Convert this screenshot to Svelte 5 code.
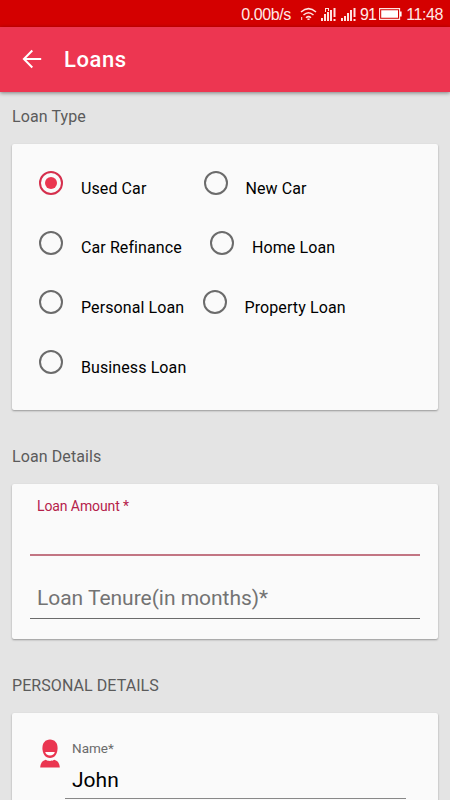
<script>
  let selected = $state('Used Car');
  const rows = [
    [{ name: 'Used Car', width: 164.5 }, { name: 'New Car', width: 150 }],
    [{ name: 'Car Refinance', width: 171 }, { name: 'Home Loan', width: 150 }],
    [{ name: 'Personal Loan', width: 163.5 }, { name: 'Property Loan', width: 150 }],
    [{ name: 'Business Loan', width: 180 }]
  ];
</script>

<div class="screen">
  <div class="status">
    <span class="speed">0.00b/s</span>
    <svg class="wifi" width="17" height="14" viewBox="0 0 17 14" fill="none" stroke="#ffe3e1" stroke-width="1.5">
      <path d="M1 5Q8.5-1.8 16 5M3.5 8Q8.5 3.4 13.5 8M6 10.7Q8.5 8.6 11 10.7" />
      <path d="M7.4 12.2h2.2" />
      <path d="M1.7 10v3" stroke-width="1" />
    </svg>
    <svg class="signal" width="15" height="13" viewBox="0 0 15 13" fill="#ffe3e1">
      <path d="M0 10h2v3H0zM3 6h2v7H3zM6 4h2v9H6zM9 2h2v11H9zM12.5 0h2v9h-2zM12.5 11h2v2h-2zM4 0h4v1H4zM4 0h1v4H4zM7 0h1v3H7z" />
    </svg>
    <svg class="signal second" width="15" height="13" viewBox="0 0 15 13" fill="#ffe3e1">
      <path d="M0 10h2v3H0zM3 8h2v5H3zM6 5h2v8H6zM9 2h2v11H9zM12.5 0h2v9h-2zM12.5 11h2v2h-2z" />
    </svg>
    <span class="percent">91</span>
    <svg class="battery" width="23" height="12" viewBox="0 0 23 12">
      <path d="M.6.6h20v10.8H.6z" fill="none" stroke="#ffe3e1" stroke-width="1.1" />
      <path d="M2.2 2.2h16.8v7.6H2.2zM21 3.5h1.6v5H21z" fill="#fff" />
    </svg>
    <span class="time">11:48</span>
  </div>

  <header>
    <svg width="20" height="20" viewBox="0 0 20 20" fill="none" stroke="#fff" stroke-width="2">
      <path d="M19.2 10H2.6M10.3 1.5L1.9 10l8.4 8.5" />
    </svg>
    <h1>Loans</h1>
  </header>

  <main>
    <h2 class="type">Loan Type</h2>
    <section class="card options">
      {#each rows as row}
        <div class="row">
          {#each row as option}
            <button style="width:{option.width}px" onclick={() => (selected = option.name)}>
              <span class="radio" class:on={selected === option.name}></span>
              <span class="label">{option.name}</span>
            </button>
          {/each}
        </div>
      {/each}
    </section>

    <h2 class="details">Loan Details</h2>
    <section class="card fields">
      <div class="field amount"><span>Loan Amount *</span></div>
      <div class="field tenure"><span>Loan Tenure(in months)*</span></div>
    </section>

    <h2 class="personal">PERSONAL DETAILS</h2>
    <section class="card person">
      <svg width="20" height="29" viewBox="0 0 20 29" fill="#ea3550">
        <path d="M10 .5C5.300.5 2.400 4 2.400 9c0 5.900 3 10 7.600 10s7.600-4.100 7.600-10C17.600 4 14.700.5 10 .5z" />
        <path d="M5.200 13h9.600c-.5 2.200-2.300 3.600-4.800 3.600S5.700 15.200 5.200 13z" fill="#fff" />
        <path d="M.2 28.500c.2-4 1.900-6.800 5.500-7.800 2.300 1.600 6.300 1.600 8.600 0 3.600 1 5.300 3.800 5.500 7.800z" />
      </svg>
      <div class="name">
        <span class="caption">Name*</span>
        <span class="value">John</span>
      </div>
    </section>
  </main>
</div>

<style>
  :global(body) { margin: 0; }
  .screen {
    width: 450px; height: 800px; overflow: hidden;
    display: flex; flex-direction: column;
    background: #e4e4e4; font-family: Roboto, sans-serif;
  }
  .status {
    height: 27px; flex: none; display: flex; align-items: center; justify-content: flex-end;
    padding-right: 7px; box-sizing: border-box;
    background: #d40000; color: #ffe9e7;
    font-family: "Liberation Sans", sans-serif; font-size: 16px; line-height: 27px;
  }
  .status span { padding-top: 1px; height: 26px; white-space: nowrap; letter-spacing: -.4px; }
  .status svg { margin-top: 1px; }
  .status .percent { letter-spacing: -.8px; }
  .wifi { margin-left: 9px; }
  .signal { margin-left: 4px; margin-right: 1px; }
  .second { margin-right: 4px; }
  .battery { margin: 0 4px 0 3px; }
  header {
    height: 64.500px; flex: none; box-sizing: border-box; display: flex; align-items: center;
    padding-left: 22px; background: #ed3651; color: #fff;
    box-shadow: 0 1px 4px rgba(0, 0, 0, .45); z-index: 1;
  }
  h1 { margin: 1px 0 0 22px; font-size: 22px; font-weight: 500; letter-spacing: .6px; }
  main { display: flex; flex-direction: column; padding: 0 12px; }
  h2 { margin: 0; height: 20px; font-size: 16px; line-height: 20px; font-weight: 400; color: #5b5b5b; }
  .type { margin-top: 15px; letter-spacing: .1px; }
  .card {
    flex: none; box-sizing: border-box; background: #fafafa; border-radius: 2px;
    box-shadow: 0 1px 2px rgba(0, 0, 0, .34);
  }
  .options { margin-top: 17.500px; height: 265.500px; padding: 9.500px 0 0 27px; }
  .row { display: flex; height: 59.600px; align-items: center; }
  button {
    display: flex; align-items: center; flex: none; padding: 0; border: 0; background: none;
    font: 16px/20px Roboto, sans-serif; color: #000; text-align: left;
  }
  .radio {
    width: 24px; height: 24px; box-sizing: border-box; border: 2px solid #6b6b6b; border-radius: 50%;
    display: flex; align-items: center; justify-content: center;
  }
  .radio.on { border-color: #d52f4d; }
  .radio.on::after { content: ""; width: 12px; height: 12px; border-radius: 50%; background: #ea3550; }
  .label { margin: 11px 0 0 18px; white-space: nowrap; letter-spacing: .1px; }
  .details { margin-top: 37.500px; letter-spacing: .1px; }
  .fields { margin-top: 17px; height: 155px; padding: 0 18px; }
  .field { box-sizing: border-box; padding-left: 7px; }
  .amount { height: 72px; padding-top: 13px; border-bottom: 2px solid #c27583; font-size: 14px; line-height: 18px; color: #b5214a; letter-spacing: -.1px; }
  .tenure { height: 63px; padding-top: 28px; border-bottom: 1px solid #6b6b6b; font-size: 21px; line-height: 28px; color: #737373; letter-spacing: -.03px; }
  .personal { margin-top: 37px; letter-spacing: .07px; }
  .person { margin-top: 17px; height: 130px; display: flex; padding: 26px 32px 0 28px; }
  .name {
    height: 60px; margin-left: 5px; padding-left: 7px; flex: 1; display: flex; flex-direction: column;
    border-bottom: 1px solid #888; box-sizing: border-box;
  }
  .caption { font-size: 13.500px; line-height: 18px; color: #6b6b6b; }
  .value { margin-top: 9px; font-size: 21px; line-height: 28px; color: #000; }
</style>
